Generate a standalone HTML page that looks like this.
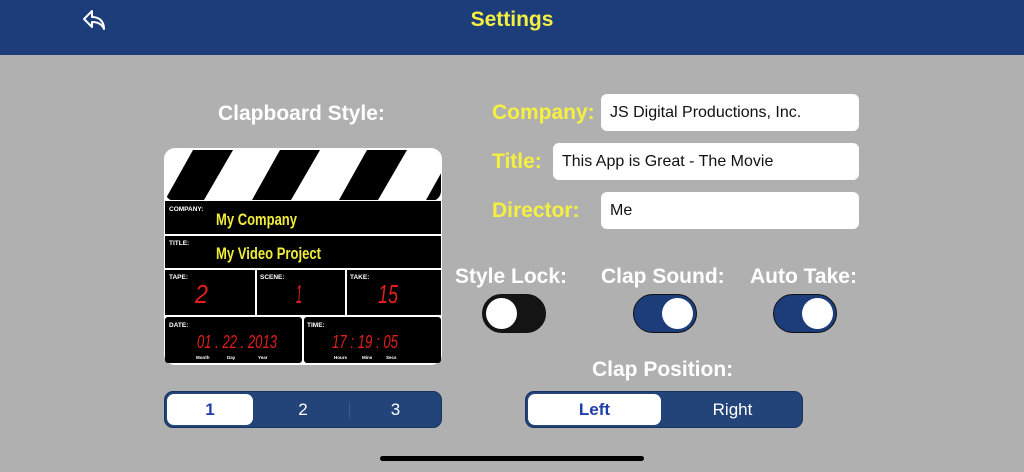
<!DOCTYPE html>
<html><head><meta charset="utf-8"><style>
*{margin:0;padding:0;box-sizing:border-box}
body{width:1024px;height:472px;background:#b0b0b0;position:relative;overflow:hidden;font-family:"Liberation Sans",sans-serif}
.hdr{position:absolute;left:0;top:0;width:1024px;height:55px;background:#1c3d7a}
.ttl{position:absolute;left:0;width:1024px;top:8px;text-align:center;color:#f5f040;font-weight:bold;font-size:21px}
.lbl{position:absolute;color:#fff;font-weight:bold;font-size:21px;white-space:nowrap}
.y{color:#f5f040;font-size:21px}
.inp{position:absolute;background:#fff;border-radius:6px;height:37px;font-size:16px;color:#111;padding-left:9px;line-height:38px}
.tg{position:absolute;width:64px;height:39px;border-radius:20px;border:1.5px solid #111}
.tg i{position:absolute;top:3px;width:31px;height:31px;border-radius:50%;background:#fff}
.seg{position:absolute;height:37px;background:#224479;border-radius:9px;border:1px solid #17335f;top:391px}
.seg div{position:absolute;top:2px;height:31px;line-height:31px;text-align:center;color:#fff;font-size:17px}
.seg .on{background:#fff;color:#1f3fa8;border-radius:7px;font-weight:bold}
</style></head><body>
<div class="hdr"></div>
<svg style="position:absolute;left:82px;top:9px" width="26" height="22" viewBox="0 0 26 22"><path d="M10 2 L2 10 L10 18 L10 13 C16 13 20 15 22 20 C22 12 17 8 10 8 Z" fill="none" stroke="#fff" stroke-width="2" stroke-linejoin="round"/></svg>
<div class="ttl">Settings</div>

<div class="lbl" style="left:218px;top:102px">Clapboard Style:</div>
<svg style="position:absolute;left:164px;top:148px" width="278" height="217" viewBox="0 0 278 217">
<rect x="0" y="0" width="278" height="217" rx="11" fill="#fff"/>
<clipPath id="c"><rect x="1" y="1" width="276" height="52" rx="10"/></clipPath>
<g fill="#000" clip-path="url(#c)">
<polygon points="29,2 69,2 40,52 1,52"/>
<polygon points="116,2 156,2 127,52 88,52"/>
<polygon points="203,2 243,2 214,52 175,52"/>
<polygon points="290,2 330,2 301,52 262,52"/>
<polygon points="-58,2 -18,2 -47,52 -86,52"/>
</g>
<rect x="1" y="53" width="276" height="33" fill="#000"/>
<rect x="1" y="88" width="276" height="32" fill="#000"/>
<rect x="1" y="122" width="90" height="45" fill="#000"/>
<rect x="93" y="122" width="88" height="45" fill="#000"/>
<rect x="183" y="122" width="94" height="45" fill="#000"/>
<rect x="1" y="169" width="137" height="46" rx="3" fill="#000"/>
<rect x="140" y="169" width="137" height="46" rx="3" fill="#000"/>
<g fill="#fff" font-family="Liberation Sans" font-weight="bold" font-size="6.5">
<text x="5" y="63">COMPANY:</text><text x="5" y="97">TITLE:</text>
<text x="5" y="131">TAPE:</text><text x="96" y="131">SCENE:</text><text x="186" y="131">TAKE:</text>
<text x="5" y="179">DATE:</text><text x="143" y="179">TIME:</text>
<g font-size="4.5"><text x="32" y="211">Month</text><text x="63" y="211">Day</text><text x="94" y="211">Year</text>
<text x="170" y="211">Hours</text><text x="198" y="211">Mins</text><text x="222" y="211">Secs</text></g>
</g>
<g fill="#f0ec3a" font-family="Liberation Sans" font-weight="bold" font-size="17">
<text x="52" y="77" textLength="81" lengthAdjust="spacingAndGlyphs">My Company</text><text x="52" y="111" textLength="105" lengthAdjust="spacingAndGlyphs">My Video Project</text></g>
<g fill="#e41d1d" font-family="Liberation Sans" font-style="italic" font-size="26">
<text x="31" y="155" textLength="13" lengthAdjust="spacingAndGlyphs">2</text><text x="132" y="155" textLength="6" lengthAdjust="spacingAndGlyphs">1</text><text x="214" y="155" textLength="20" lengthAdjust="spacingAndGlyphs">15</text>
<text x="33" y="200" font-size="18" textLength="80" lengthAdjust="spacingAndGlyphs">01 . 22 . 2013</text><text x="168" y="200" font-size="18" textLength="66" lengthAdjust="spacingAndGlyphs">17 : 19 : 05</text></g>
</svg>

<div class="lbl y" style="left:492px;top:101px">Company:</div>
<div class="inp" style="left:601px;top:94px;width:258px">JS Digital Productions, Inc.</div>
<div class="lbl y" style="left:492px;top:150px">Title:</div>
<div class="inp" style="left:553px;top:143px;width:306px">This App is Great - The Movie</div>
<div class="lbl y" style="left:492px;top:199px">Director:</div>
<div class="inp" style="left:601px;top:192px;width:258px">Me</div>

<div class="lbl" style="left:455px;top:265px">Style Lock:</div>
<div class="lbl" style="left:601px;top:265px">Clap Sound:</div>
<div class="lbl" style="left:750px;top:265px">Auto Take:</div>
<div class="tg" style="left:482px;top:294px;background:#141414"><i style="left:3px"></i></div>
<div class="tg" style="left:633px;top:294px;background:#1c3d7a"><i style="left:28px"></i></div>
<div class="tg" style="left:773px;top:294px;background:#1c3d7a"><i style="left:28px"></i></div>

<div class="lbl" style="left:592px;top:358px">Clap Position:</div>

<div class="seg" style="left:164px;width:278px">
<div class="on" style="left:2px;width:86px">1</div>
<div style="left:92px;width:92px">2</div>
<div style="left:184px;width:92px;border-left:1px solid #3a5790;height:18px;top:9px;line-height:18px">3</div>
</div>
<div class="seg" style="left:525px;width:278px">
<div class="on" style="left:2px;width:133px">Left</div>
<div style="left:137px;width:139px">Right</div>
</div>
<div style="position:absolute;left:380px;top:456px;width:264px;height:5px;border-radius:3px;background:#000"></div>
</body></html>
